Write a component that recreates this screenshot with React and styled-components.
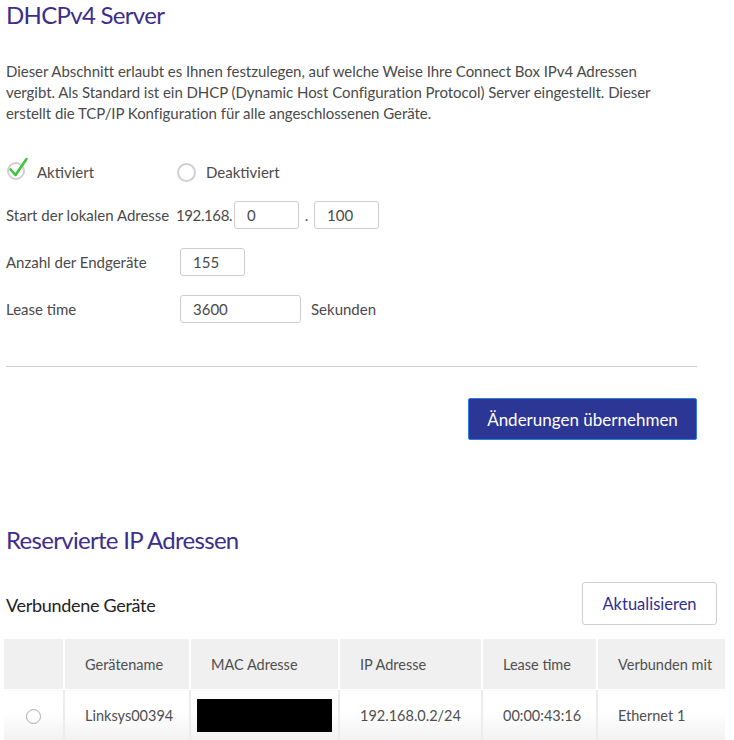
import styled, { createGlobalStyle } from "styled-components";

const GlobalStyle = createGlobalStyle`
  body {
    margin: 0;
    background: #fff;
    font-family: Lato, "Open Sans", sans-serif;
    color: #4a4a4a;
  }
`;

export default function App() {
  return (
    <>
      <GlobalStyle />
      <Page>
        <Title>DHCPv4 Server</Title>
        <Intro>
          Dieser Abschnitt erlaubt es Ihnen festzulegen, auf welche Weise Ihre
          Connect Box IPv4 Adressen vergibt. Als Standard ist ein DHCP (Dynamic
          Host Configuration Protocol) Server eingestellt. Dieser erstellt die
          TCP/IP Konfiguration für alle angeschlossenen Geräte.
        </Intro>

        <Form>
          <RadioRow>
            <RadioOption $width="170px">
              <CheckIcon />
              Aktiviert
            </RadioOption>
            <RadioOption>
              <EmptyRadio />
              Deaktiviert
            </RadioOption>
          </RadioRow>

          <FieldRow>
            <Label $width="170px">Start der lokalen Adresse</Label>
            <Prefix>192.168.</Prefix>
            <Input $width="65px" defaultValue="0" />
            <Dot>.</Dot>
            <Input $width="65px" defaultValue="100" />
          </FieldRow>

          <FieldRow>
            <Label>Anzahl der Endgeräte</Label>
            <Input $width="65px" defaultValue="155" />
          </FieldRow>

          <FieldRow>
            <Label>Lease time</Label>
            <Input $width="121px" defaultValue="3600" />
            <Unit>Sekunden</Unit>
          </FieldRow>

          <Divider />

          <Actions>
            <PrimaryButton>Änderungen übernehmen</PrimaryButton>
          </Actions>
        </Form>

        <SectionTitle>Reservierte IP Adressen</SectionTitle>

        <TableHeader>
          <SubTitle>Verbundene Geräte</SubTitle>
          <SecondaryButton>Aktualisieren</SecondaryButton>
        </TableHeader>

        <Table>
          <colgroup>
            <col style={{ width: 60 }} />
            <col style={{ width: 126 }} />
            <col style={{ width: 149 }} />
            <col style={{ width: 143 }} />
            <col style={{ width: 115 }} />
            <col style={{ width: 128 }} />
          </colgroup>
          <thead>
            <tr>
              <Th />
              <Th>Gerätename</Th>
              <Th>MAC Adresse</Th>
              <Th>IP Adresse</Th>
              <Th>Lease time</Th>
              <Th>Verbunden mit</Th>
            </tr>
          </thead>
          <tbody>
            <tr>
              <Td $center>
                <RowRadio />
              </Td>
              <Td>Linksys00394</Td>
              <Td $tight>
                <Redacted />
              </Td>
              <Td>192.168.0.2/24</Td>
              <Td>00:00:43:16</Td>
              <Td>Ethernet 1</Td>
            </tr>
          </tbody>
        </Table>
      </Page>
    </>
  );
}

function CheckIcon() {
  return (
    <IconBox>
      <svg width="22" height="24" viewBox="0 0 22 24">
        <circle cx="9" cy="14" r="8" fill="none" stroke="#cfcfcf" strokeWidth="2" />
        <path
          d="M3.5 12.5 L8.5 18 L19.5 2"
          fill="none"
          stroke="#3cc43c"
          strokeWidth="2.6"
          strokeLinecap="round"
          strokeLinejoin="round"
        />
      </svg>
    </IconBox>
  );
}

const Page = styled.div`
  width: 734px;
  padding: 0 0 0 6px;
  box-sizing: border-box;
`;

const Title = styled.h1`
  margin: 0;
  font-size: 24px;
  line-height: 30px;
  font-weight: 400;
  letter-spacing: -0.7px;
  color: #3b2e8c;
`;

const SectionTitle = styled(Title)`
  margin-top: 85px;
`;

const Intro = styled.p`
  margin: 31px 0 0;
  width: 660px;
  font-size: 15px;
  line-height: 21px;
  letter-spacing: -0.05px;
  color: #4a4a4a;
`;

const Form = styled.div`
  width: 691px;
  margin-top: 36px;
  display: flex;
  flex-direction: column;
  gap: 19px;
`;

const RadioRow = styled.div`
  display: flex;
  align-items: center;
  height: 24px;
  margin-bottom: -2px;
`;

const RadioOption = styled.label`
  display: flex;
  align-items: center;
  gap: 8px;
  width: ${(p) => p.$width || "auto"};
  font-size: 15px;
  color: #4a4a4a;
`;

const IconBox = styled.span`
  display: inline-flex;
  margin-top: -6px;
  margin-left: 1px;
`;

const EmptyRadio = styled.span`
  width: 15px;
  height: 15px;
  border: 2px solid #d0d0d0;
  border-radius: 50%;
  margin-left: 1px;
  margin-right: 2px;
`;

const FieldRow = styled.div`
  display: flex;
  align-items: center;
  height: 28px;
  font-size: 15px;
`;

const Label = styled.span`
  width: ${(p) => p.$width || "174px"};
  flex-shrink: 0;
  color: #4a4a4a;
`;

const Prefix = styled.span`
  margin-right: 2px;
  letter-spacing: -0.4px;
`;

const Dot = styled.span`
  width: 15px;
  text-align: center;
`;

const Unit = styled.span`
  margin-left: 10px;
`;

const Input = styled.input`
  width: ${(p) => p.$width};
  height: 28px;
  box-sizing: border-box;
  border: 1px solid #cdcdcd;
  border-radius: 3px;
  padding: 0 12px;
  font-family: inherit;
  font-size: 15px;
  color: #4a4a4a;
  outline: none;
`;

const Divider = styled.hr`
  width: 100%;
  margin: 24px 0 0;
  border: none;
  border-top: 1px solid #cfcfcf;
`;

const Actions = styled.div`
  display: flex;
  justify-content: flex-end;
  margin-top: 12px;
`;

const PrimaryButton = styled.button`
  width: 229px;
  height: 42px;
  border: 1px solid #2f7fe0;
  border-radius: 2px;
  background: #2b3695;
  color: #fff;
  font-family: inherit;
  font-size: 17px;
`;

const TableHeader = styled.div`
  display: flex;
  align-items: center;
  justify-content: space-between;
  width: 711px;
  margin-top: 27px;
`;

const SubTitle = styled.h2`
  margin: 2px 0 0;
  font-size: 18px;
  font-weight: 400;
  letter-spacing: -0.3px;
  color: #222;
`;

const SecondaryButton = styled.button`
  width: 135px;
  height: 43px;
  border: 1px solid #cfcfcf;
  border-radius: 3px;
  background: #fff;
  color: #2f2f8f;
  font-family: inherit;
  font-size: 16.5px;
`;

const Table = styled.table`
  margin: 14px 0 0 -2px;
  width: 721px;
  border-collapse: collapse;
  table-layout: fixed;
  font-size: 14.5px;
  color: #4f4f4f;
`;

const Th = styled.th`
  height: 50px;
  padding: 0 0 0 20px;
  background: #f0f0f0;
  border-right: 2px solid #fff;
  border-bottom: 1px solid #fff;
  text-align: left;
  font-weight: 400;
  &:last-child {
    border-right: none;
  }
`;

const Td = styled.td`
  height: 50px;
  padding: 0 0 0 ${(p) => (p.$tight ? "6px" : p.$center ? "0" : "20px")};
  text-align: ${(p) => (p.$center ? "center" : "left")};
  background: linear-gradient(#fff 40%, #f2f2f2);
  border-right: 2px solid #ececec;
  &:last-child {
    border-right: none;
  }
`;

const RowRadio = styled.span`
  display: inline-block;
  width: 13px;
  height: 13px;
  border: 1px solid #aaa;
  border-radius: 50%;
  vertical-align: middle;
`;

const Redacted = styled.div`
  width: 135px;
  height: 33px;
  background: #000;
`;
